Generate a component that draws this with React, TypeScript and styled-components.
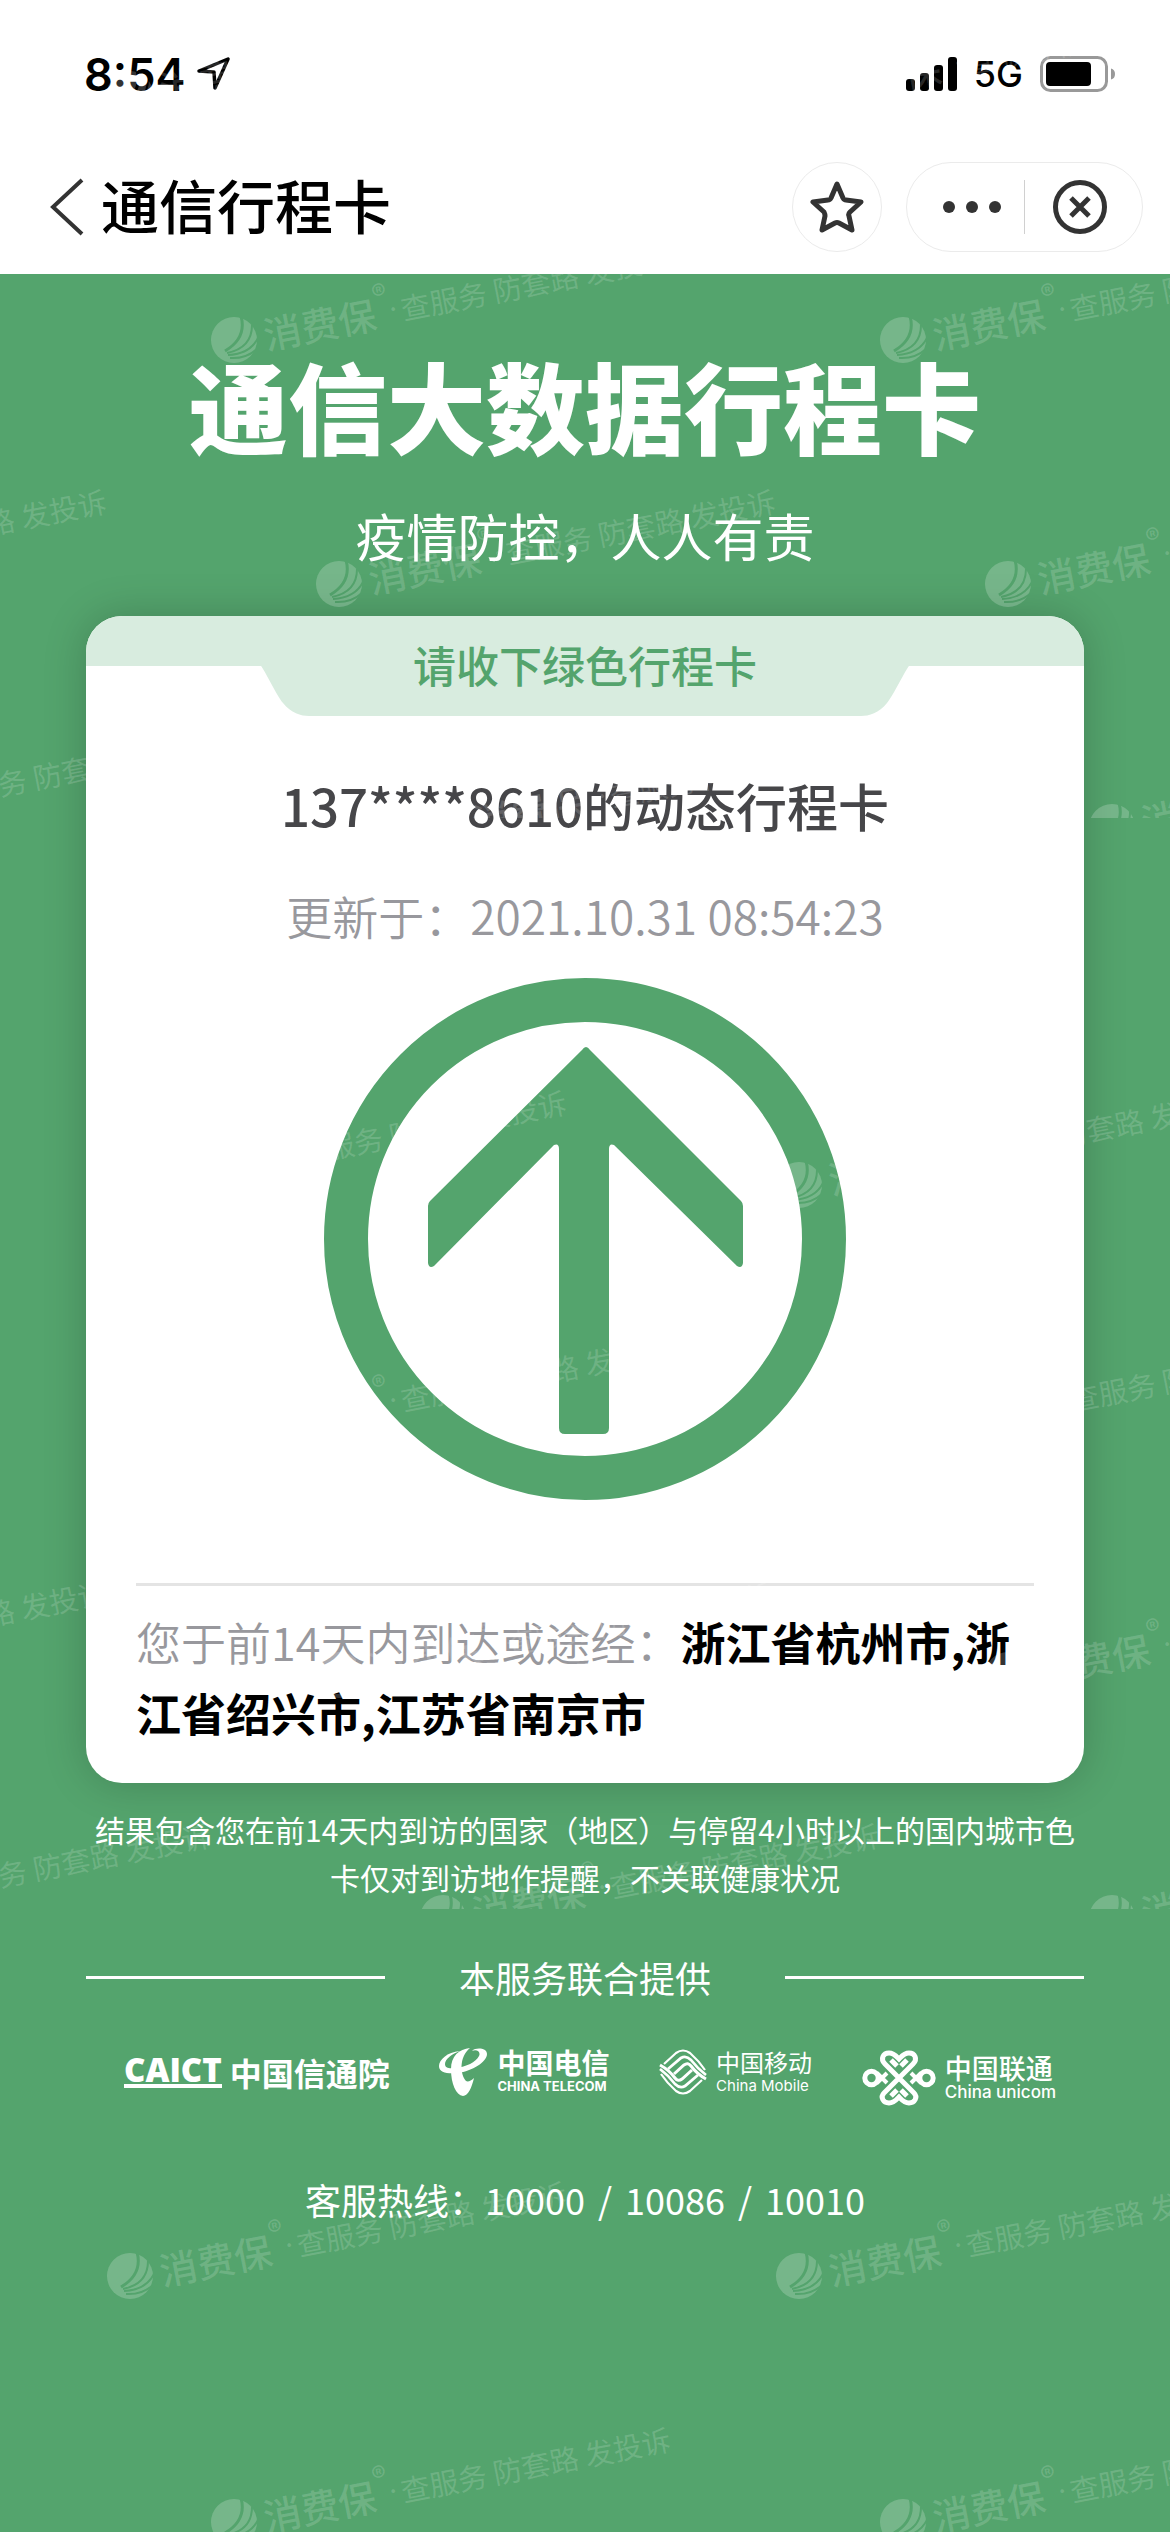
import styled, { createGlobalStyle } from "styled-components";

const GREEN = "#54a46d";
const MINT = "#d8ecdf";
const INK = "#333333";

const marks = [
  { x: 130, y: 367 },
  { x: 234, y: 613 },
  { x: 339, y: 857 },
  { x: 443, y: 1100 },
];
const repeats = [-669, 0, 669];
const tiles = [0, 1, 2];
const hotlines = ["10000", "10086", "10010"];

function StatusIcons() {
  return (
    <StatusGroup>
      <svg width="51" height="36" viewBox="0 0 51 36" aria-label="信号">
        <rect x="0" y="23" width="9" height="12" rx="3" />
        <rect x="14" y="17" width="9" height="18" rx="3" />
        <rect x="28" y="9" width="9" height="26" rx="3" />
        <rect x="42" y="1" width="9" height="34" rx="3" />
      </svg>
      <Network>5G</Network>
      <svg width="76" height="36" viewBox="0 0 76 36" aria-label="电量">
        <rect x="1.5" y="1.5" width="65" height="33" rx="9" fill="none" stroke="#999" strokeWidth="3" />
        <rect x="6" y="6" width="45" height="24" rx="4" />
        <path d="M71 12.500Q75 13.500 75 18T71 23.500Z" fill="#999" />
      </svg>
    </StatusGroup>
  );
}

function TripArrow() {
  return (
    <ArrowIcon viewBox="0 0 522 522" fill={GREEN} aria-label="绿色行程卡">
      <circle cx="261" cy="261" r="239" fill="none" stroke={GREEN} strokeWidth="44" />
      <path d="M262 69Q264 69 266 72L417 223Q419 225 419 228V285Q418 291 413 288L290 167Q285 165 285 171V450Q285 456 279 456H241Q235 456 235 450V171Q235 165 230 167L110 288Q105 291 104 285V228Q104 225 106 223L258 72Q260 69 262 69Z" />
    </ArrowIcon>
  );
}

function TelecomIcon() {
  return (
    <svg width="49" height="48" viewBox="0 0 49 48" fill="#fff">
      <path d="M21 3C8 4 0 12 0 18C0 25 9 26 19 25C33 23 48 14 48 6C48 0 37-1 33 3C38 1 42 4 40 8C37 14 27 19 17 20C10 21 6 20 6 16C6 11 13 6 21 3Z" />
      <path d="M31 0C20 1 12 8 12 21C12 36 17 47 24 48C29 48 33 39 35 30C32 33 29 34 27 33C21 26 20 9 31 0Z" />
    </svg>
  );
}

function MobileIcon() {
  const wave = (
    <>
      <path d="M5 16L17 5Q24 0 31 5Q40 13 46 22" strokeWidth="2.200" />
      <path d="M9 21L22 10Q27 7 32 12Q39 21 47 27" strokeWidth="2.800" />
      <path d="M15 26L25 17Q29 14 32 18Q38 26 47 31" strokeWidth="3" />
    </>
  );
  return (
    <svg width="48" height="48" viewBox="0 0 48 48" fill="none" stroke="#fff">
      {wave}
      <g transform="rotate(180 24 24)">{wave}</g>
    </svg>
  );
}

function UnicomIcon() {
  return (
    <svg width="74" height="56" viewBox="0 0 74 56" fill="none" stroke="#fff" strokeWidth="5">
      <circle cx="9.500" cy="28" r="6.700" />
      <circle cx="64.500" cy="28" r="6.700" />
      <path d="M35 16L29 10M39 16L45 10M35 40L29 46M39 40L45 46" />
      <path d="M52 43L23 14C18 9 21 3 27 3C32 3 35 7 37 9C39 7 42 3 47 3C53 3 56 9 51 14L22 43C18 47 21 53 27 53C32 53 35 49 37 47C39 49 42 53 47 53C53 53 56 47 52 43Z" />
      <path d="M15 23L25 33M15 33L25 23M59 23L49 33M59 33L49 23" strokeWidth="4" />
    </svg>
  );
}

function Watermark({ x, y }: { x: number; y: number }) {
  return (
    <Mark $x={x} $y={y}>
      <svg width="48" height="48" viewBox="0 0 48 48">
        <mask id="leaf">
          <circle cx="24" cy="24" r="23" fill="#fff" />
          <g fill="none" stroke="#000" strokeWidth="2">
            <path d="M31 0Q37 22 15 35" strokeWidth="3" />
            <path d="M42 9Q42 32 17 37" />
            <path d="M48 22Q40 38 18 39" />
            <path d="M47 33Q36 43 20 42" />
          </g>
        </mask>
        <rect width="48" height="48" fill="#fff" opacity="0.200" mask="url(#leaf)" />
      </svg>
      <MarkText>
        <strong>消费保</strong>
        <sup>®</sup>
        <i>·</i>
        <span>查服务 防套路 发投诉</span>
      </MarkText>
    </Mark>
  );
}

function App() {
  return (
    <Page>
      <GlobalStyle />
      <StatusBar>
        <Clock>
          8:54
          <svg width="34" height="34" viewBox="0 0 34 34" fill="none" stroke="#000" strokeWidth="3.500" strokeLinejoin="round">
            <path d="M2 14L31 2L18 31L17 15Z" />
          </svg>
        </Clock>
        <StatusIcons />
      </StatusBar>
      <NavBar>
        <BackButton aria-label="返回">
          <svg width="36" height="58" viewBox="0 0 36 58" fill="none" stroke={INK} strokeWidth="4">
            <path d="M33 2L4 29L33 56" />
          </svg>
        </BackButton>
        <NavTitle>通信行程卡</NavTitle>
        <StarButton aria-label="收藏">
          <svg width="54" height="52" viewBox="0 0 54 52" fill="none" stroke={INK} strokeWidth="5" strokeLinejoin="round">
            <path d="M27 3L33 17Q34 19 36 19L51 21L40 31Q38 33 39 35L42 49L29 42Q27 41 25 42L12 49L15 35Q15 33 14 31L3 21L18 19Q20 19 21 17Z" />
          </svg>
        </StarButton>
        <Capsule>
          <MoreButton aria-label="更多">
            <svg width="58" height="12" viewBox="0 0 58 12" fill={INK}>
              <circle cx="6" cy="6" r="6" />
              <circle cx="29" cy="6" r="6" />
              <circle cx="52" cy="6" r="6" />
            </svg>
          </MoreButton>
          <CloseButton aria-label="关闭">
            <svg width="54" height="54" viewBox="0 0 54 54" fill="none" stroke={INK} strokeWidth="5">
              <circle cx="27" cy="27" r="24.500" />
              <path d="M18 18L36 36M36 18L18 36" />
            </svg>
          </CloseButton>
        </Capsule>
      </NavBar>

      <Main>
        <Title>通信大数据行程卡</Title>
        <Slogan>疫情防控，人人有责</Slogan>
        <Card>
          <Ribbon>
            <RibbonTab>请收下绿色行程卡</RibbonTab>
          </Ribbon>
          <Phone>137****8610的动态行程卡</Phone>
          <Updated>更新于：2021.10.31 08:54:23</Updated>
          <TripArrow />
          <Places>
            您于前14天内到达或途经：
            <b>浙江省杭州市,浙江省绍兴市,江苏省南京市</b>
          </Places>
        </Card>
        <Note>
          结果包含您在前14天内到访的国家（地区）与停留4小时以上的国内城市色卡仅对到访地作提醒，不关联健康状况
        </Note>
        <Providers>本服务联合提供</Providers>
        <Logos>
          <Caict>
            <span>CAICT</span>
            <b>中国信通院</b>
          </Caict>
          <Logo>
            <TelecomIcon />
            <LogoText $size={28} $sub={13} $weight={700}>
              <b>中国电信</b>
              <small>CHINA TELECOM</small>
            </LogoText>
          </Logo>
          <Logo>
            <MobileIcon />
            <LogoText $size={24} $sub={15} $weight={400}>
              <b>中国移动</b>
              <small>China Mobile</small>
            </LogoText>
          </Logo>
          <Logo $low>
            <UnicomIcon />
            <LogoText $size={27} $sub={17} $weight={500}>
              <b>中国联通</b>
              <small>China unicom</small>
            </LogoText>
          </Logo>
        </Logos>
        <Hotline>
          客服热线：
          <Numbers>
            {hotlines.map((number) => (
              <li key={number}>{number}</li>
            ))}
          </Numbers>
        </Hotline>
      </Main>

      <Overlay aria-hidden="true">
        {tiles.map((tile) => (
          <Tile key={tile}>
            {marks.map((mark) =>
              repeats
                .map((dx) => mark.x + dx)
                .filter((x) => x > -430)
                .map((x) => <Watermark key={x} x={x} y={mark.y} />)
            )}
          </Tile>
        ))}
      </Overlay>
    </Page>
  );
}

const GlobalStyle = createGlobalStyle`
  * {
    box-sizing: border-box;
    margin: 0;
    padding: 0;
  }
  body {
    background: ${GREEN};
    font-family: "Noto Sans CJK SC", sans-serif;
  }
  button {
    border: none;
    background: none;
    display: flex;
    align-items: center;
    justify-content: center;
  }
  svg {
    display: block;
    flex-shrink: 0;
  }
`;

const Page = styled.div`
  position: relative;
  min-height: 100vh;
  display: flex;
  flex-direction: column;
  overflow: hidden;
`;

const StatusBar = styled.header`
  height: 140px;
  padding: 8px 54px 0 84px;
  display: flex;
  align-items: center;
  justify-content: space-between;
  background: #fff;
`;

const Clock = styled.div`
  display: flex;
  align-items: center;
  gap: 12px;
  font-family: Inter, sans-serif;
  font-size: 45px;
  font-weight: 600;
`;

const StatusGroup = styled.div`
  display: flex;
  align-items: center;
  gap: 17px;
`;

const Network = styled.span`
  font-family: Inter, sans-serif;
  font-size: 36px;
  font-weight: 500;
`;

const NavBar = styled.nav`
  height: 134px;
  padding: 0 27px 0 49px;
  display: flex;
  align-items: center;
  background: #fff;
`;

const BackButton = styled.button`
  width: 52px;
  height: 90px;
  justify-content: flex-start;
`;

const NavTitle = styled.h2`
  flex: 1;
  padding-bottom: 6px;
  font-size: 58px;
  line-height: 80px;
  font-weight: 500;
`;

const StarButton = styled.button`
  width: 90px;
  height: 90px;
  margin-right: 24px;
  border: 1px solid #ebebeb;
  border-radius: 50%;
`;

const Capsule = styled.div`
  width: 237px;
  height: 90px;
  display: flex;
  align-items: center;
  border: 1px solid #ebebeb;
  border-radius: 45px;
`;

const MoreButton = styled.button`
  width: 118px;
  height: 54px;
  padding-left: 12px;
  border-right: 1px solid #d0d0d0;
`;

const CloseButton = styled.button`
  flex: 1;
  height: 54px;
  padding-right: 8px;
`;

const Main = styled.main`
  flex: 1;
  padding: 80px 86px 40px;
  display: flex;
  flex-direction: column;
  background: ${GREEN};
  color: #fff;
`;

const Title = styled.h1`
  font-size: 99px;
  line-height: 100px;
  font-weight: 900;
  text-align: center;
`;

const Slogan = styled.p`
  margin: 51px 0;
  font-size: 51px;
  line-height: 60px;
  text-align: center;
`;

const Card = styled.section`
  padding-bottom: 35px;
  border-radius: 36px;
  background: #fff;
  box-shadow: 0 0 44px rgba(0, 0, 0, 0.2);
  overflow: hidden;
`;

const Ribbon = styled.div`
  display: flex;
  justify-content: center;
  background: linear-gradient(${MINT} 50px, #fff 50px);
`;

const RibbonTab = styled.div`
  width: 648px;
  height: 100px;
  background: ${MINT};
  clip-path: path("M0 0H648V50C645 53 632 80 626 87C618 97 608 100 600 100H48C40 100 30 97 22 87C16 80 3 53 0 50Z");
  color: ${GREEN};
  font-size: 43px;
  line-height: 96px;
  font-weight: 500;
  text-align: center;
`;

const Phone = styled.h3`
  margin-top: 59px;
  color: #464649;
  font-size: 51px;
  line-height: 60px;
  font-weight: 500;
  text-align: center;
`;

const Updated = styled.p`
  margin-top: 50px;
  color: #98989d;
  font-size: 46px;
  line-height: 60px;
  font-weight: 350;
  text-align: center;
`;

const ArrowIcon = styled.svg`
  width: 522px;
  margin: 33px auto 83px;
`;

const Places = styled.p`
  margin: 0 50px;
  padding-top: 20px;
  border-top: 3px solid #e4e4e4;
  color: #98989d;
  font-size: 45px;
  line-height: 71px;
  font-weight: 350;

  b {
    color: #000;
    font-weight: 700;
  }
`;

const Note = styled.p`
  margin-top: 22px;
  font-size: 30px;
  line-height: 48px;
  text-align: center;
`;

const Providers = styled.h4`
  margin-top: 51px;
  display: flex;
  align-items: center;
  gap: 74px;
  font-size: 36px;
  line-height: 50px;
  font-weight: 400;

  &::before,
  &::after {
    content: "";
    flex: 1;
    height: 3px;
    background: #fff;
  }
`;

const Logos = styled.div`
  height: 60px;
  margin-top: 42px;
  padding: 0 28px 0 38px;
  display: flex;
  justify-content: space-between;
`;

const Caict = styled.div`
  height: 56px;
  display: flex;
  align-items: center;
  gap: 8px;
  font-size: 32px;
  line-height: 32px;

  span {
    font-family: "Open Sans", sans-serif;
    font-size: 33px;
    line-height: 28px;
    font-weight: 800;
    border-bottom: 4px solid #fff;
  }
`;

const Logo = styled.div<{ $low?: boolean }>`
  height: ${(props) => (props.$low ? 68 : 56)}px;
  display: flex;
  align-items: center;
  gap: 9px;
`;

const LogoText = styled.div<{ $size: number; $sub: number; $weight: number }>`
  display: flex;
  flex-direction: column;

  b {
    font-size: ${(props) => props.$size}px;
    line-height: 28px;
    font-weight: ${(props) => props.$weight};
  }
  small {
    font-family: Inter, sans-serif;
    font-size: ${(props) => props.$sub}px;
    line-height: 20px;
    font-weight: ${(props) => props.$weight};
  }
`;

const Hotline = styled.div`
  margin-top: 70px;
  display: flex;
  justify-content: center;
  font-size: 36px;
  line-height: 50px;
`;

const Numbers = styled.ul`
  display: flex;
  list-style: none;

  li + li::before {
    content: "/";
    margin: 0 13px;
  }
`;

const Overlay = styled.div`
  position: absolute;
  inset: -273px 0 0;
  overflow: hidden;
  pointer-events: none;
`;

const Tile = styled.div`
  position: relative;
  height: 1091px;
  overflow: hidden;
`;

const Mark = styled.div<{ $x: number; $y: number }>`
  position: absolute;
  left: ${(props) => props.$x - 24}px;
  top: ${(props) => props.$y - 24}px;
  display: flex;
  align-items: center;
  white-space: nowrap;
`;

const MarkText = styled.div`
  height: 48px;
  padding-left: 6px;
  display: flex;
  align-items: center;
  color: rgba(255, 255, 255, 0.16);
  font-size: 29px;
  line-height: 48px;
  transform: rotate(-11deg);
  transform-origin: -24px 24px;

  strong {
    font-size: 38px;
    font-weight: 500;
  }
  sup {
    align-self: flex-start;
    width: 14px;
    font-family: Inter, sans-serif;
    font-size: 22px;
    line-height: 8px;
  }
  i {
    width: 12px;
    font-family: Inter, sans-serif;
    font-style: normal;
  }
`;

export default App;
